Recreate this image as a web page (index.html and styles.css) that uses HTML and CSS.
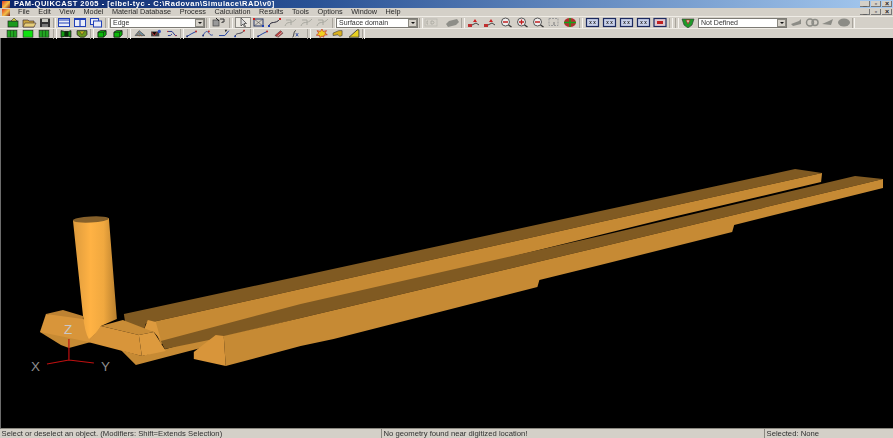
FILE: index.html
```html
<!DOCTYPE html>
<html lang="en">
<head>
<meta charset="utf-8">
<title>PAM-QUIKCAST 2005</title>
<link rel="stylesheet" href="styles.css">
</head>
<body>
<svg class="defs" width="0" height="0" aria-hidden="true">
  <symbol id="house" viewBox="0 0 16 11"><rect x="3" y="4" width="10" height="6" fill="#1c9a1c" stroke="#222" stroke-width=".7"/><path d="M6 4 9 1l3 3z" fill="#d8d040" stroke="#333" stroke-width=".6"/></symbol>
  <symbol id="folder" viewBox="0 0 16 11"><path d="M2 3h5l1 1h5v6H2z" fill="#c9a43e" stroke="#433" stroke-width=".7"/><path d="M4 6h11l-2 4H2z" fill="#e7cf7a" stroke="#433" stroke-width=".6"/></symbol>
  <symbol id="save" viewBox="0 0 16 11"><rect x="3" y="1.500" width="10" height="8.500" fill="#333"/><rect x="5" y="2" width="6" height="3" fill="#c8c8c0"/><rect x="5" y="7" width="6" height="3" fill="#777"/></symbol>
  <symbol id="winh" viewBox="0 0 16 11"><rect x="2.500" y="1.500" width="11" height="8" fill="#e8ecf8" stroke="#2040b8"/><path d="M2.500 3h11M2.500 6h11" stroke="#2040b8" stroke-width="1.200"/></symbol>
  <symbol id="winv" viewBox="0 0 16 11"><rect x="2.500" y="1.500" width="11" height="8" fill="#e8ecf8" stroke="#2040b8"/><path d="M2.500 2.500h11M8 2v8" stroke="#2040b8" stroke-width="1.200"/></symbol>
  <symbol id="wins" viewBox="0 0 16 11"><rect x="2.500" y="1.500" width="8" height="6" fill="#e8ecf8" stroke="#2040b8"/><rect x="5.500" y="4" width="8" height="6" fill="#e8ecf8" stroke="#2040b8"/></symbol>
  <symbol id="query" viewBox="0 0 16 11"><rect x="2" y="3" width="6" height="6" fill="#999" stroke="#444" stroke-width=".7"/><path d="M9 2h4v3h-2v1" fill="none" stroke="#333"/><path d="M5 1 8 4" stroke="#222"/></symbol>
  <symbol id="cursor" viewBox="0 0 16 11"><path d="M6 1v8l2-2 1.500 3 1-.5L9 6.500h2.500z" fill="#ddd" stroke="#333" stroke-width=".7"/></symbol>
  <symbol id="net" viewBox="0 0 16 11"><rect x="3" y="2" width="9" height="7" fill="none" stroke="#2b3a6a"/><path d="M3 2l9 7M12 2 3 9" stroke="#555" stroke-width=".6"/><rect x="2" y="1" width="2" height="2" fill="#d02020"/><rect x="11" y="8" width="2" height="2" fill="#2040b0"/></symbol>
  <symbol id="curve" viewBox="0 0 16 11"><path d="M2 9C4 3 8 8 13 2" fill="none" stroke="#223"/><rect x="1" y="8" width="2" height="2" fill="#2040b0"/><rect x="12" y="1" width="2" height="2" fill="#d02020"/></symbol>
  <symbol id="ghost" viewBox="0 0 16 11"><path d="M2 9C4 3 8 8 13 2M3 3h5v5" fill="none" stroke="#a8a8a0"/></symbol>
  <symbol id="cd" viewBox="0 0 16 11"><rect x="2" y="2" width="12" height="7" fill="none" stroke="#b4b4ac" stroke-width=".7"/><path d="M5 4H4v3h1M8 4v3h2l1-1.500L10 4z" fill="none" stroke="#a0a098" stroke-width=".7"/></symbol>
  <symbol id="blob" viewBox="0 0 16 11"><path d="M2 7l3-3 8-2 2 3-3 3-8 2z" fill="#8e8e88"/></symbol>
  <symbol id="pt" viewBox="0 0 16 11"><path d="M2 9l4-1 4-2 3 2" fill="none" stroke="#444"/><path d="M7 5l2-3 2 3z" fill="#d02020"/><rect x="2" y="7" width="4" height="3" fill="#c03030"/></symbol>
  <symbol id="zoom" viewBox="0 0 16 11"><circle cx="7.500" cy="5" r="4" fill="#eee" stroke="#555"/><path d="M5 5h5" stroke="#c02020" stroke-width="1.500"/><path d="M10.500 8l3 2" stroke="#333" stroke-width="1.400"/></symbol>
  <symbol id="zplus" viewBox="0 0 16 11"><circle cx="7.500" cy="5" r="4" fill="#eee" stroke="#555"/><path d="M5 5h5M7.500 2.500v5" stroke="#c02020" stroke-width="1.300"/><path d="M10.500 8l3 2" stroke="#333" stroke-width="1.400"/></symbol>
  <symbol id="zfit" viewBox="0 0 16 11"><rect x="3" y="1.500" width="9" height="7" fill="none" stroke="#999" stroke-dasharray="2 1"/><path d="M8 5v3" stroke="#777"/></symbol>
  <symbol id="globe" viewBox="0 0 16 11"><ellipse cx="8" cy="5.500" rx="6" ry="4.500" fill="#b03030"/><path d="M2 5.500h12M8 1v9" stroke="#18a018" stroke-width="1.500"/></symbol>
  <symbol id="px" viewBox="0 0 16 11"><rect x="2" y="1.500" width="12" height="8" fill="#c8d0e8" stroke="#1c2a60" stroke-width="1.200"/><path d="M5 4l2 3M7 4 5 7M9 4l2 3M11 4 9 7" stroke="#222" stroke-width=".7"/></symbol>
  <symbol id="pr" viewBox="0 0 16 11"><rect x="2" y="1.500" width="12" height="8" fill="#e0c8d0" stroke="#1c2a60" stroke-width="1.200"/><path d="M5 4h6v3H5z" fill="#c02020"/></symbol>
  <symbol id="shield" viewBox="0 0 16 11"><path d="M2 2h12l-2 6-4 3-4-3z" fill="#1f9a2a" stroke="#333" stroke-width=".6"/><path d="M6 3h4L8 7z" fill="#e8d8c8" stroke="#b02020" stroke-width=".7"/></symbol>
  <symbol id="gray1" viewBox="0 0 16 11"><path d="M3 7l8-3 2-2v5l-8 2z" fill="#8c8c86"/></symbol>
  <symbol id="gray2" viewBox="0 0 16 11"><circle cx="6" cy="5.500" r="3.500" fill="none" stroke="#8c8c86" stroke-width="1.500"/><circle cx="11" cy="5.500" r="3" fill="none" stroke="#8c8c86" stroke-width="1.500"/></symbol>
  <symbol id="gray3" viewBox="0 0 16 11"><path d="M2 7l7-3 4-2-2 6z" fill="#8c8c86"/></symbol>
  <symbol id="gray4" viewBox="0 0 16 11"><ellipse cx="8" cy="5.500" rx="6" ry="4" fill="#8c8c86"/></symbol>
  <symbol id="gridg" viewBox="0 0 16 11"><rect x="2" y="1.500" width="12" height="8.500" fill="#22a522" stroke="#222" stroke-width=".8"/><path d="M6 1.500v8.500M10 1.500v8.500" stroke="#0a4a0a" stroke-width=".8"/></symbol>
  <symbol id="fullg" viewBox="0 0 16 11"><rect x="2" y="1.500" width="12" height="8.500" fill="#10e010" stroke="#222" stroke-width=".8"/></symbol>
  <symbol id="boxg" viewBox="0 0 16 11"><path d="M2 2l4 1h5l3-1v8l-3-1H6l-4 1z" fill="#109a10" stroke="#111"/><rect x="6" y="3" width="5" height="6" fill="#0a2a0a"/></symbol>
  <symbol id="boxy" viewBox="0 0 16 11"><path d="M2 2h12v5l-3 3H6L2 7z" fill="#6a9a20" stroke="#222"/><path d="M5 3l3 4 3-4" fill="#c8b020" stroke="#222" stroke-width=".6"/></symbol>
  <symbol id="solid" viewBox="0 0 16 11"><path d="M3 4l3-2h7v5l-3 3H3z" fill="#0bb80b" stroke="#111"/><path d="M3 4h7v6M10 4l3-2" fill="none" stroke="#111" stroke-width=".7"/></symbol>
  <symbol id="hatch" viewBox="0 0 16 11"><path d="M2 8l5-6 7 6z" fill="#6e8ea0" stroke="#333" stroke-width=".7"/><path d="M6 4l4 5M4 6l3 3" stroke="#a06030"/></symbol>
  <symbol id="mesh" viewBox="0 0 16 11"><rect x="2" y="3" width="10" height="6" fill="#444"/><path d="M3 4l3 4 3-4" stroke="#d03030"/><circle cx="12" cy="3" r="2" fill="#3050c0"/></symbol>
  <symbol id="swap" viewBox="0 0 16 11"><path d="M3 3h5l4 5h2M3 8h3l2-2" fill="none" stroke="#2a3a90" stroke-width="1.200"/><path d="M2 2l2 1-2 1zM12 7l2 1-2 1z" fill="#c03030"/></symbol>
  <symbol id="line" viewBox="0 0 16 11"><path d="M2 9l5-3 6-3" fill="none" stroke="#2040a0" stroke-width="1.200"/><rect x="1" y="8" width="2" height="2" fill="#1c2a70"/><rect x="12" y="2" width="2" height="2" fill="#c02020"/></symbol>
  <symbol id="arc" viewBox="0 0 16 11"><path d="M2 8c3-6 5-6 7-3s4 3 5 2" fill="none" stroke="#2040a0"/><rect x="1" y="7" width="2" height="2" fill="#1c2a70"/><rect x="8" y="2" width="2" height="2" fill="#c02020"/></symbol>
  <symbol id="pen" viewBox="0 0 16 11"><path d="M2 8h7l5-6" fill="none" stroke="#2040a0" stroke-width="1.200"/><path d="M9 1h3l-2 3z" fill="#222"/></symbol>
  <symbol id="erase" viewBox="0 0 16 11"><path d="M3 8l7-6 3 3-6 5z" fill="#c04040" stroke="#333" stroke-width=".6"/><path d="M6 9l7-6" stroke="#ccc"/></symbol>
  <symbol id="fx" viewBox="0 0 16 11"><path d="M5 10c2 0 1-8 4-8" fill="none" stroke="#222"/><path d="M9 5l3 4M12 5 9 9" stroke="#2040a0"/></symbol>
  <symbol id="burst" viewBox="0 0 16 11"><path d="M8 0l1.500 3 4-1-2 3 3 2-4 .5-.5 2.500L8 8.500 5.500 10.500 5 8 1 7.500l3-2.500-2-3 4 1z" fill="#f0d020" stroke="#c02020" stroke-width=".8"/></symbol>
  <symbol id="pipe" viewBox="0 0 16 11"><path d="M2 5l7-3h4v6l-3 1-2-2-6 1z" fill="#d8b020" stroke="#333" stroke-width=".7"/></symbol>
  <symbol id="wedge" viewBox="0 0 16 11"><path d="M2 10 12 1h2v9z" fill="#e8d020" stroke="#333"/></symbol>
</svg>

<div class="app">
  <header class="titlebar">
    <span class="appicon"></span>
    <span class="title">PAM-QUIKCAST 2005 - [elbel-tyc - C:\Radovan\Simulace\RAD\v0]</span>
    <span class="winbtns"><i>_</i><i>▫</i><i>×</i></span>
  </header>
  <nav class="menubar">
    <span class="appicon"></span>
    <ul class="menu">
      <li>File</li><li>Edit</li><li>View</li><li>Model</li><li>Material Database</li><li>Process</li><li>Calculation</li><li>Results</li><li>Tools</li><li>Options</li><li>Window</li><li>Help</li>
    </ul>
    <span class="winbtns"><i>_</i><i>▫</i><i>×</i></span>
  </nav>

  <div class="toolbar row1">
    <svg class="ic"><use href="#house"/></svg><svg class="ic"><use href="#folder"/></svg><svg class="ic"><use href="#save"/></svg>
    <b class="sep w3"></b>
    <svg class="ic"><use href="#winh"/></svg><svg class="ic"><use href="#winv"/></svg><svg class="ic"><use href="#wins"/></svg>
    <b class="sep w6"></b>
    <div class="combo edge"><span>Edge</span><u></u></div>
    <b class="sep w6"></b>
    <svg class="ic"><use href="#query"/></svg>
    <b class="sep w8"></b>
    <svg class="ic pressed"><use href="#cursor"/></svg><svg class="ic"><use href="#net"/></svg><svg class="ic"><use href="#curve"/></svg><svg class="ic"><use href="#ghost"/></svg><svg class="ic"><use href="#ghost"/></svg><svg class="ic"><use href="#ghost"/></svg>
    <b class="sep w5"></b>
    <div class="combo surface"><span>Surface domain</span><u></u></div>
    <b class="sep w5"></b>
    <svg class="ic"><use href="#cd"/></svg><svg class="ic wide"><use href="#blob"/></svg>
    <b class="sep w6"></b>
    <svg class="ic"><use href="#pt"/></svg><svg class="ic"><use href="#pt"/></svg><svg class="ic"><use href="#zoom"/></svg><svg class="ic"><use href="#zplus"/></svg><svg class="ic"><use href="#zoom"/></svg><svg class="ic"><use href="#zfit"/></svg><svg class="ic"><use href="#globe"/></svg>
    <b class="sep w6"></b>
    <svg class="ic tall"><use href="#px"/></svg><svg class="ic tall"><use href="#px"/></svg><svg class="ic tall"><use href="#px"/></svg><svg class="ic tall"><use href="#px"/></svg><svg class="ic"><use href="#pr"/></svg>
    <b class="sep w6"></b><b class="sep w6"></b>
    <svg class="ic"><use href="#shield"/></svg>
    <div class="combo notdef"><span>Not Defined</span><u></u></div>
    <svg class="ic"><use href="#gray1"/></svg><svg class="ic"><use href="#gray2"/></svg><svg class="ic"><use href="#gray3"/></svg><svg class="ic"><use href="#gray4"/></svg>
    <b class="sep w3"></b>
  </div>

  <div class="toolbar row2">
    <svg class="ic"><use href="#gridg"/></svg><svg class="ic"><use href="#fullg"/></svg><svg class="ic"><use href="#gridg"/></svg>
    <b class="sep w6"></b>
    <svg class="ic"><use href="#boxg"/></svg><svg class="ic"><use href="#boxy"/></svg>
    <b class="sep w4"></b>
    <svg class="ic"><use href="#solid"/></svg><svg class="ic"><use href="#solid"/></svg>
    <b class="sep w6"></b>
    <svg class="ic"><use href="#hatch"/></svg><svg class="ic"><use href="#mesh"/></svg><svg class="ic"><use href="#swap"/></svg>
    <b class="sep w4"></b>
    <svg class="ic"><use href="#line"/></svg><svg class="ic"><use href="#arc"/></svg><svg class="ic"><use href="#pen"/></svg><svg class="ic"><use href="#curve"/></svg>
    <b class="sep w7"></b>
    <svg class="ic"><use href="#line"/></svg><svg class="ic"><use href="#erase"/></svg>
    <svg class="ic"><use href="#fx"/></svg>
    <b class="sep w11"></b>
    <svg class="ic"><use href="#burst"/></svg><svg class="ic"><use href="#pipe"/></svg><svg class="ic"><use href="#wedge"/></svg>
    <b class="sep w3"></b>
  </div>

  <main class="viewport">
    <svg class="scene" viewBox="0 39 893 390" preserveAspectRatio="none">
      <defs>
        <linearGradient id="cyl" x1="0" x2="1" y1="0" y2="0">
          <stop offset="0" stop-color="#dc9a3c"/>
          <stop offset=".4" stop-color="#ffb244"/>
          <stop offset=".7" stop-color="#f0a83f"/>
          <stop offset="1" stop-color="#b87f2e"/>
        </linearGradient>
      </defs>
      <!-- left block -->
      <polygon class="f-side" points="39,333 60,346 68,349 90,343 70,330"/>
      <polygon class="f-tone" points="45,315 62,311 82,317 82,326"/>
      <polygon class="f-front" points="45,315 39,333 88,343 100,327 82,320"/>
      <!-- back rail -->
      <polygon class="f-dark" points="123,315 300,277 563,220 795,170 822,174 600,223 300,290 147,324 125,328"/>
      <polygon class="f-mid" points="147,324 300,290 600,223 822,174 821,183 668,219 300,310 160,345 155,333"/>
      <!-- lower channel under front block -->
      <polygon class="f-mid" points="120,351 135,366 200,349 213,345 218,335 165,350 141,357"/>
      <!-- front rail -->
      <polygon class="f-dark" points="160,342 300,305 600,237 668,221 855,177 883,180 600,248 300,319 218,339 164,350"/>
      <polygon class="f-mid" points="223,337 300,319 600,248 883,180 883,189 734,226 732,233 600,266 539,281 537,288 333,340 300,347 225,367"/>
      <polygon class="f-front" points="193,353 215,336 223,337 225,367 193,360"/>
      <!-- centre block -->
      <polygon class="f-dark" points="120,327 146,321 143,331 125,331"/>
      <polygon class="f-light" points="143,331 147,321 155,323 160,341 153,333"/>
      <polygon class="f-top" points="100,327 122,321 153,333 138,336"/>
      <polygon class="f-front" points="87,343 100,327 138,336 141,357"/>
      <polygon class="f-light" points="138,336 153,333 165,352 141,357"/>
      <!-- cylinder -->
      <path fill="url(#cyl)" d="M72 221 82 316Q84 334 88 340 95 335 100 327L116 320 108 219Z"/>
      <ellipse class="f-cap" cx="90" cy="220.500" rx="18" ry="3" transform="rotate(-3 90 220.500)"/>
      <!-- axes -->
      <path class="axis" d="M68 340V361M46 365 68 361 93 364"/>
      <text class="lbl z" x="63" y="335">Z</text>
      <text class="lbl" x="30" y="372">X</text>
      <text class="lbl" x="100" y="372">Y</text>
    </svg>
  </main>

  <footer class="statusbar">
    <div class="cell c1">Select or deselect an object. (Modifiers: Shift=Extends Selection)</div>
    <div class="cell c2">No geometry found near digitized location!</div>
    <div class="cell c3">Selected: None</div>
  </footer>
</div>
</body>
</html>
```

FILE: styles.css
```css
* { box-sizing: border-box; margin: 0; padding: 0; }
html, body { height: 100%; overflow: hidden; }
body { background: #000; font-family: "Liberation Sans", Arial, sans-serif; }
.defs { display: block; height: 0; }

.app { width: 893px; height: 438px; display: flex; flex-direction: column; background: #d4d0c8; }

.titlebar {
  height: 8px; display: flex; align-items: center; padding-left: 2px;
  background: linear-gradient(90deg, #0a246a 0%, #2a5295 35%, #a6caf0 100%);
  color: #fff; font-size: 7.500px; font-weight: 700; line-height: 8px;
}
.title { margin-left: 4px; white-space: nowrap; letter-spacing: .5px; filter: blur(.3px); }
.appicon { width: 8px; height: 7px; background: linear-gradient(135deg, #e23b22, #f3c04a 55%, #7a1e1e); flex: none; }

.winbtns { margin-left: auto; display: flex; gap: 1px; padding-right: 1px; }
.winbtns i {
  width: 10px; height: 6px; background: #d4d0c8; color: #222; font-style: normal;
  font-size: 7px; line-height: 6px; text-align: center; font-weight: 700; box-shadow: inset -1px -1px 0 #777;
}

.menubar {
  height: 8px; display: flex; align-items: center; padding-left: 2px;
  background: #d4d0c8; color: #2a2a2a; font-size: 7.300px; line-height: 8px;
}
.menu { display: flex; list-style: none; margin-left: 8px; filter: blur(.3px); }
.menu li { margin-right: 8.500px; white-space: nowrap; }

.toolbar {
  display: flex; align-items: center; padding-left: 5px;
  border-top: 1px solid #efece6; filter: blur(.4px);
}
.row1 { height: 12px; }
.row2 { height: 10px; padding-left: 4px; }
.row2 .ic { height: 9px; }

.ic { width: 16px; height: 11px; flex: none; display: block; }
.ic.wide { width: 21px; padding-left: 5px; }
.ic.tall { width: 17px; }
.pressed { background: #ece9e2; outline: 1px solid #8c8a84; outline-offset: -1px; }
.sep { height: 10px; flex: none; display: flex; justify-content: center; }
.sep::before { content: ""; width: 2px; height: 100%; border-left: 1px solid #a8a49c; border-right: 1px solid #f6f4f0; }
.w3 { width: 3px; }
.w4 { width: 4px; }
.w5 { width: 5px; }
.w6 { width: 6px; }
.w7 { width: 7px; }
.w8 { width: 8px; }
.w11 { width: 11px; }

.combo {
  height: 10px; flex: none; display: flex; align-items: center; justify-content: space-between;
  background: #fff; border: 1px solid #7c7a74; padding-left: 2px;
  font-size: 7px; line-height: 8px; color: #333;
}
.combo u { width: 9px; height: 8px; background: #d4d0c8; position: relative; text-decoration: none; border: 1px solid #8a8880; }
.combo u::after {
  content: ""; position: absolute; left: 1.500px; top: 2px;
  border: 2px solid transparent; border-top: 2px solid #111; border-bottom: 0;
}
.edge { width: 95px; }
.surface { width: 82px; }
.notdef { width: 89px; margin-left: 2px; margin-right: 1px; }

.viewport { flex: 1; min-height: 0; background: #000; border-left: 1px solid #6c6c6c; border-bottom: 1px solid #8a8880; }
.scene { display: block; width: 100%; height: 100%; }

.f-dark { fill: #805a22; }
.f-mid { fill: #c68a34; }
.f-front { fill: #d8953a; }
.f-light { fill: #dd9a3e; }
.f-top { fill: #c98c36; }
.f-tone { fill: #bd8232; }
.f-side { fill: #c68a34; }
.f-cap { fill: #86602a; }
.axis { fill: none; stroke: #c01010; stroke-width: 1.200; }
.lbl { fill: #8e8e8e; font-family: "Liberation Sans", Arial, sans-serif; font-size: 13.500px; font-weight: 400; }
.lbl.z { fill: #c8c8c8; }

.statusbar { height: 9px; display: flex; background: #d4d0c8; color: #303030; font-size: 7.700px; line-height: 9px; }
.cell { padding-left: 1.500px; white-space: nowrap; overflow: hidden; border-right: 1px solid #8a8880; filter: blur(.25px); }
.c1 { width: 382px; }
.c2 { width: 383px; }
.c3 { flex: 1; border-right: 0; }
```
